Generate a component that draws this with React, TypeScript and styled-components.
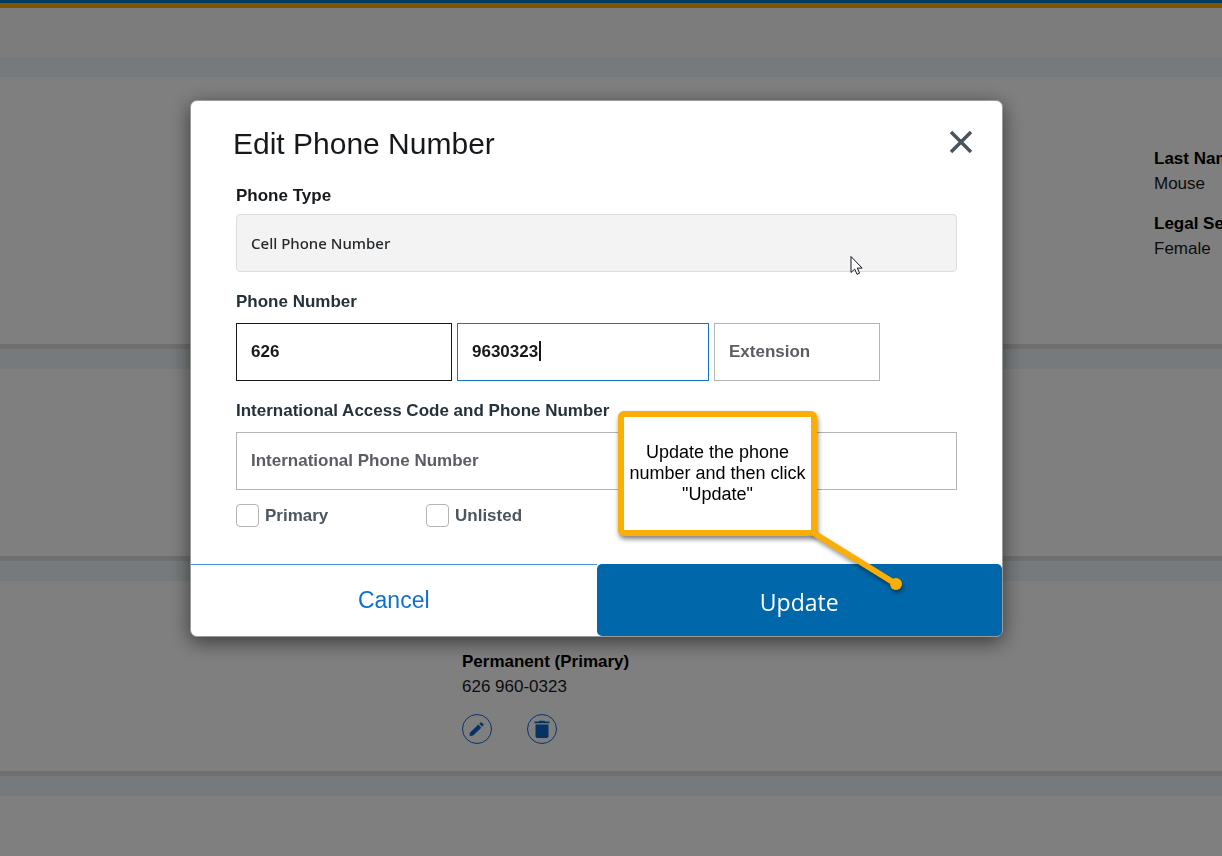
import React, { useState } from 'react';
import styled, { createGlobalStyle } from 'styled-components';

const GlobalStyle = createGlobalStyle`
  * { box-sizing: border-box; }
  body {
    margin: 0;
    background: #ffffff;
    color: #16191c;
    font-family: "Liberation Sans", Arial, sans-serif;
    font-size: 17px;
    line-height: 25px;
  }
  button, input, select { font: inherit; color: inherit; margin: 0; }
`;

/* ---------- profile page behind the dialog ---------- */

const Page = styled.main`
  min-height: 100vh;
  overflow: hidden;
`;

const TopBar = styled.header`
  height: 57px;
  border-top: 3px solid #0076c0;
  background: linear-gradient(#ffa90a 5px, #f8f8f8 5px);
`;

const Section = styled.section<{ $height: number; $last?: boolean }>`
  min-height: ${(p) => p.$height}px;
  display: grid;
  grid-template-columns: repeat(4, 346px);
  align-content: start;
  padding-left: 116px;
  background: #ffffff;
  border-top: 20px solid #edf5f8;
  border-bottom: ${(p) => (p.$last ? '0' : '5px')} solid #dedede;
`;

const FieldList = styled.dl<{ $column: number; $top: number }>`
  grid-column: ${(p) => p.$column};
  margin: 0;
  padding-top: ${(p) => p.$top}px;
  white-space: nowrap;
`;

const Term = styled.dt`
  font-weight: bold;
  color: #000000;
`;

const Value = styled.dd`
  margin: 0 0 15px;
`;

const IconRow = styled.dd`
  display: flex;
  gap: 35px;
  margin: 0;
`;

const RoundButton = styled.button`
  display: grid;
  place-items: center;
  width: 30px;
  height: 30px;
  padding: 0;
  border: 1px solid #0b6cd4;
  border-radius: 50%;
  background: transparent;
  color: #0a66c8;
`;

/* ---------- dialog ---------- */

const Backdrop = styled.div`
  position: fixed;
  inset: 0;
  display: flex;
  justify-content: center;
  align-items: flex-start;
  padding: 100px 29px 0 0;
  overflow: auto;
  background: rgba(0, 0, 0, 0.5);
`;

const Dialog = styled.form`
  position: relative;
  width: 100%;
  max-width: 813px;
  border: 1px solid #9a9a9a;
  border-radius: 7px;
  background: #ffffff;
  box-shadow: 0 5px 20px rgba(0, 0, 0, 0.55);
`;

const DialogHeader = styled.div`
  display: flex;
  justify-content: space-between;
  align-items: flex-start;
  padding: 25px 29px 0 42px;
`;

const Title = styled.h1`
  margin: 0;
  font-size: 30px;
  line-height: 36px;
  font-weight: normal;
`;

const CloseButton = styled.button`
  display: grid;
  padding: 4px 0 8px;
  border: 0;
  background: none;
  color: #4a545d;
`;

const DialogBody = styled.div`
  padding: 20px 45px 36px;
`;

const Label = styled.label<{ $dark?: boolean }>`
  display: block;
  height: ${(p) => (p.$dark ? 32 : 35)}px;
  line-height: 27px;
  font-weight: bold;
  color: ${(p) => (p.$dark ? '#16191c' : '#26323a')};
`;

const Group = styled.div`
  margin-bottom: 16px;
`;

const TypeSelect = styled.select`
  appearance: none;
  display: block;
  width: 100%;
  height: 58px;
  padding: 0 14px;
  border: 1px solid #dddddd;
  border-radius: 4px;
  background: #f3f3f3;
  color: #26292c;
  opacity: 1;
  font-family: "Noto Sans", sans-serif;
  font-size: 15px;
  font-weight: 500;
`;

const NumberRow = styled.div`
  display: grid;
  grid-template-columns: 216fr 252fr 166fr 72fr;
  gap: 5px;
`;

const TextInput = styled.input<{ $tone?: string }>`
  display: block;
  width: 100%;
  height: 58px;
  padding: 0 14px;
  border: 1px solid ${(p) => p.$tone ?? '#b4b4b4'};
  border-radius: 0;
  outline: none;
  background: #ffffff;
  font-weight: bold;
  &::placeholder { color: #5c5d63; opacity: 1; }
`;

const CaretBox = styled.div`
  position: relative;
  &::after {
    content: '';
    position: absolute;
    left: 82px;
    top: 18px;
    width: 2px;
    height: 20px;
    background: #16191c;
  }
`;

const CheckRow = styled.div`
  display: grid;
  grid-template-columns: 190px 190px;
  margin-top: -3px;
`;

const CheckLabel = styled.label`
  display: flex;
  align-items: center;
  gap: 6px;
  font-weight: bold;
  color: #4b565f;
`;

const Check = styled.input`
  appearance: none;
  width: 23px;
  height: 23px;
  border: 1px solid #b4b4b4;
  border-radius: 4px;
  background: #ffffff;
  &:checked { background: #0068aa; }
`;

const Footer = styled.div`
  display: grid;
  grid-template-columns: 1fr 1fr;
  height: 72px;
`;

const CancelButton = styled.button`
  padding: 0;
  border: 0;
  border-top: 1px solid #4398de;
  border-radius: 0 0 0 6px;
  background: none;
  color: #0f70cc;
  font-size: 23px;
`;

const UpdateButton = styled.button`
  padding: 4px 0 0;
  border: 0;
  border-radius: 5px;
  background: #0068aa;
  color: #ffffff;
  font-family: "Open Sans", sans-serif;
  font-size: 23px;
`;

/* ---------- annotation ---------- */

const Callout = styled.aside`
  position: absolute;
  left: 427px;
  top: 310px;
  width: 199px;
  height: 125px;
  display: flex;
  align-items: center;
  justify-content: center;
  border: 6px solid #f9ae08;
  border-radius: 6px;
  background: #ffffff;
  box-shadow: 1px 3px 5px rgba(0, 0, 0, 0.5);
  color: #000000;
  font-size: 18px;
  line-height: 21px;
  text-align: center;
`;

const CalloutLine = styled.svg`
  position: absolute;
  left: 190px;
  top: 112px;
  overflow: visible;
  filter: drop-shadow(1px 3px 2px rgba(0, 0, 0, 0.4));
  pointer-events: none;
`;

const Pointer = styled.svg`
  position: absolute;
  left: 659px;
  top: 154px;
  pointer-events: none;
`;

const PencilIcon = () => (
  <svg width="16" height="16" viewBox="0 0 16 16" fill="currentColor" aria-hidden="true">
    <path d="M1.300 11.300 9.300 3.600l3 3.100-7.900 7.500q-.4.400-1 .5l-2 .3q-.9.100-.8-.8l.2-1.900q.1-.6.500-1ZM10.300 2.700l1.100-1.100q.8-.7 1.600.1l1.300 1.300q.8.800 0 1.600l-1.100 1.100Z" />
  </svg>
);

const TrashIcon = () => (
  <svg width="16" height="18" viewBox="0 0 16 18" fill="currentColor" aria-hidden="true">
    <path d="M.5 1.600h4.200L5.500.7h5l.8.900h4.200v1.600H.5ZM1.500 4.400h13v11.800q0 1.800-1.800 1.800H3.300q-1.800 0-1.800-1.800Z" />
  </svg>
);

export default function App() {
  const [areaCode, setAreaCode] = useState('626');
  const [phone, setPhone] = useState('9630323');

  return (
    <>
      <GlobalStyle />
      <Page>
        <TopBar />
        <Section $height={292}>
          <FieldList $column={4} $top={69}>
            <Term>Last Name</Term>
            <Value>Mouse</Value>
            <Term>Legal Sex</Term>
            <Value>Female</Value>
          </FieldList>
        </Section>
        <Section $height={212} />
        <Section $height={215}>
          <FieldList $column={2} $top={68}>
            <Term>Permanent (Primary)</Term>
            <Value>626 960-0323</Value>
            <IconRow>
              <RoundButton type="button" aria-label="Edit phone">
                <PencilIcon />
              </RoundButton>
              <RoundButton type="button" aria-label="Delete phone">
                <TrashIcon />
              </RoundButton>
            </IconRow>
          </FieldList>
        </Section>
        <Section $height={80} $last />
      </Page>

      <Backdrop>
        <Dialog role="dialog" aria-labelledby="dialog-title" onSubmit={(e) => e.preventDefault()}>
          <DialogHeader>
            <Title id="dialog-title">Edit Phone Number</Title>
            <CloseButton type="button" aria-label="Close">
              <svg width="24" height="24" viewBox="0 0 24 24" stroke="currentColor" strokeWidth="3.500" aria-hidden="true">
                <path d="M2 2 22 22M22 2 2 22" />
              </svg>
            </CloseButton>
          </DialogHeader>

          <DialogBody>
            <Group>
              <Label $dark htmlFor="phone-type">Phone Type</Label>
              <TypeSelect id="phone-type" disabled>
                <option>Cell Phone Number</option>
              </TypeSelect>
            </Group>

            <Group>
              <Label htmlFor="area-code">Phone Number</Label>
              <NumberRow>
                <TextInput
                  id="area-code"
                  $tone="#16191c"
                  value={areaCode}
                  onChange={(e) => setAreaCode(e.target.value)}
                />
                <CaretBox>
                  <TextInput
                    aria-label="Phone number"
                    $tone="#1473c8"
                    value={phone}
                    onChange={(e) => setPhone(e.target.value)}
                  />
                </CaretBox>
                <TextInput aria-label="Extension" placeholder="Extension" />
              </NumberRow>
            </Group>

            <Group>
              <Label htmlFor="intl">International Access Code and Phone Number</Label>
              <TextInput id="intl" placeholder="International Phone Number" />
            </Group>

            <CheckRow>
              <CheckLabel><Check type="checkbox" />Primary</CheckLabel>
              <CheckLabel><Check type="checkbox" />Unlisted</CheckLabel>
            </CheckRow>
          </DialogBody>

          <Footer>
            <CancelButton type="button">Cancel</CancelButton>
            <UpdateButton type="submit">Update</UpdateButton>
          </Footer>

          <Callout>
            Update the phone number and then click "Update"
            <CalloutLine width="90" height="60" viewBox="0 0 90 60" aria-hidden="true">
              <path d="M-2 3 82 55" stroke="#f9ae08" strokeWidth="6" />
              <circle cx="82" cy="55" r="6" fill="#f9ae08" />
            </CalloutLine>
          </Callout>

          <Pointer width="13" height="21" viewBox="0 0 13 21" aria-hidden="true">
            <path
              d="M1 1.500v16l3.700-3.400 2.300 5.200 2.600-1.100-2.300-5.100h4.800Z"
              fill="#ffffff"
              stroke="#15151f"
              strokeWidth="1"
            />
          </Pointer>
        </Dialog>
      </Backdrop>
    </>
  );
}
